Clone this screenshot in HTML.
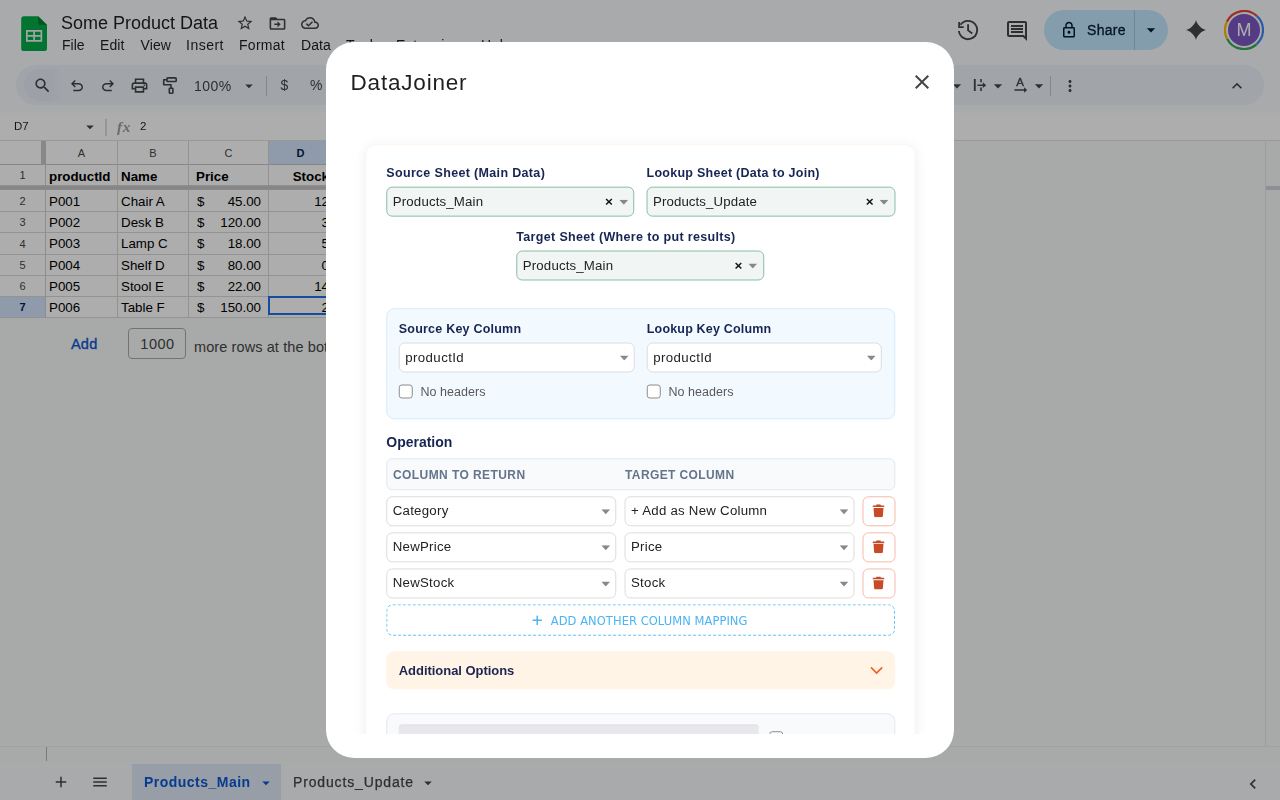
<!DOCTYPE html>
<html lang="en">
<head>
<meta charset="utf-8">
<title>Some Product Data - Google Sheets</title>
<style>
html,body{margin:0;padding:0;}
body{width:1280px;height:800px;overflow:hidden;position:relative;background:#f9fbfd;font-family:"Liberation Sans",sans-serif;color:#1f1f1f;}
.abs{position:absolute;white-space:nowrap;box-sizing:border-box;}
#app{position:absolute;left:0;top:0;width:1280px;height:800px;overflow:hidden;}
.menu{position:absolute;top:37px;font-size:14px;line-height:16px;color:#1f1f1f;white-space:nowrap;}
#title{position:absolute;left:61px;top:12px;font-size:18px;line-height:22px;color:#1f1f1f;white-space:nowrap;}
#toolbar{position:absolute;left:16px;top:65px;width:1248px;height:40px;border-radius:20px;background:#edf2fa;}
#tbsearch{position:absolute;left:24px;top:69px;width:38px;height:32px;border-radius:16px 0 0 16px;background:linear-gradient(90deg,#e7ecf6 70%,#edf2fa);}
.ic{position:absolute;}
.tbtxt{position:absolute;font-size:14px;line-height:16px;color:#444746;white-space:nowrap;}
.tbsep{position:absolute;top:76px;width:1px;height:20px;background:#c7c7c7;}
#grid{position:absolute;left:0;top:0;width:1280px;height:800px;}
.cell{position:absolute;font-size:13.330px;line-height:15px;color:#000;white-space:nowrap;}
.rh{position:absolute;left:0;width:45px;text-align:center;font-size:11px;line-height:13px;color:#444746;}
.ch{position:absolute;top:147px;text-align:center;font-size:11px;line-height:13px;color:#444746;}
#scrim{position:absolute;left:0;top:0;width:1280px;height:800px;background:rgba(0,0,0,0.32);}
#chrome,#bottombar{position:absolute;left:0;top:0;width:1280px;height:800px;will-change:transform;}
#dlg{will-change:transform;position:absolute;left:326px;top:42px;width:628px;height:716px;border-radius:28px;background:#fff;overflow:hidden;}
#dlgtitle{position:absolute;left:24.500px;top:27px;font-size:22.500px;line-height:28px;color:#1f1f1f;letter-spacing:0.81px;white-space:nowrap;}
#frame{position:absolute;left:24px;top:84px;width:580px;height:607.500px;overflow:hidden;background:#fff;color:#222;}
#frame>div{position:absolute;box-sizing:border-box;white-space:nowrap;}
.card{border:1px solid #fff6ec;border-radius:10px;background:#fff;box-shadow:0 2px 12px rgba(80,80,140,0.09);}
.lbl{font-weight:bold;font-size:12.500px;line-height:16px;color:#172554;}
.sel2{border:1px solid #86bfa2;border-radius:6px;background:#f1f5f3;}
.sel{border:1px solid #dcdcdc;border-radius:6px;background:#fff;}
.st{position:absolute;left:5.500px;top:50%;margin-top:-7.900px;font-size:13.250px;line-height:16px;color:#222;}
.sx{position:absolute;right:20.250px;top:50%;margin-top:-8.200px;font-size:13.500px;line-height:16px;font-weight:bold;color:#111;}
.sa{position:absolute;right:5.250px;top:50%;margin-top:-1.700px;}
.panel{border:1px solid #d3ebfd;border-radius:8px;background:#f3faff;}
.panel2{border:1px solid #e2e8f0;border-radius:8px;background:#f8fafc;}
.cb{border:1px solid #8a8a8a;border-radius:3px;background:#fff;}
.cbl{font-size:12.500px;line-height:16px;color:#595959;letter-spacing:0.04px;}
.thead{border:1px solid #e2e8f0;border-radius:6px;background:#f8fafc;}
.th{font-size:12px;line-height:14px;font-weight:bold;color:#64748b;}
.del{border:1px solid #f8b9a9;border-radius:6px;background:#fff;}
.addbtn{border-radius:6px;background:#fff;}
.addtxt{position:absolute;left:164.500px;top:10px;color:#4bb4f5;font-family:"DejaVu Sans","Liberation Sans",sans-serif;font-size:11.500px;line-height:14px;letter-spacing:0.05px;}
.opts{border-radius:8px;background:#fff4e6;}

</style>
</head>
<body>
<div id="app">
<div id="chrome">
<div id="title">Some Product Data</div>
<div class="menu" style="left:62px;letter-spacing:0">File</div>
<div class="menu" style="left:100px;letter-spacing:0.1px">Edit</div>
<div class="menu" style="left:140.500px;letter-spacing:0.1px">View</div>
<div class="menu" style="left:186px;letter-spacing:0.5px">Insert</div>
<div class="menu" style="left:239px;letter-spacing:0.28px">Format</div>
<div class="menu" style="left:301px;letter-spacing:0.05px">Data</div>
<div class="menu" style="left:346px;letter-spacing:0.4px">Tools</div>
<div class="menu" style="left:396px;letter-spacing:0.4px">Extensions</div>
<div class="menu" style="left:481px;letter-spacing:0.4px">Help</div>
<div id="toolbar"></div>
<div id="tbsearch"></div>
<svg class="ic" style="left:21px;top:15.500px" width="26" height="35.500" viewBox="0 0 26 35.500"><path fill="#00ac47" d="M2.600 0.200H17.200L26 9V32.600a2.600 2.600 0 0 1-2.600 2.600H2.800A2.600 2.600 0 0 1 .2 32.600V2.800A2.600 2.600 0 0 1 2.600 .2z"/><path fill="#00832d" d="M17.200 .2L26 9H19.500a2.300 2.300 0 0 1-2.300-2.300z"/><path fill="#f1f1f1" d="M5 14v11.800H21.200V14zm1.700 1.700h5.550v3.350H6.700zm7.250 0H19.500v3.350h-5.550zM6.700 20.750h5.550V24.100H6.700zm7.250 0H19.500V24.100h-5.550z"/></svg>
<svg class="ic" style="left:236.4px;top:14.3px" width="18" height="18" viewBox="0 0 24 24" ><path fill="#444746" d="M22 9.24l-7.19-.62L12 2 9.19 8.63 2 9.24l5.46 4.73L5.82 21 12 17.27 18.18 21l-1.63-7.03L22 9.24zM12 15.4l-3.76 2.27 1-4.28-3.32-2.88 4.38-.38L12 6.1l1.71 4.04 4.38.38-3.32 2.88 1 4.28L12 15.4z"/></svg>
<svg class="ic" style="left:267.8px;top:13.5px" width="19" height="19" viewBox="0 0 24 24" ><path fill="#444746" d="M20 6h-8l-2-2H4c-1.1 0-1.99.9-1.99 2L2 18c0 1.1.9 2 2 2h16c1.1 0 2-.9 2-2V8c0-1.1-.9-2-2-2zm0 12H4V8h16v10zm-8-1l4-4-4-4v3H8v2h4v3z"/></svg>
<svg class="ic" style="left:300.6px;top:14.2px" width="18" height="18" viewBox="0 0 24 24" ><path fill="#444746" d="M19.35 10.04C18.67 6.59 15.64 4 12 4 9.11 4 6.6 5.64 5.35 8.04 2.34 8.36 0 10.91 0 14c0 3.31 2.69 6 6 6h13c2.76 0 5-2.24 5-5 0-2.64-2.05-4.78-4.65-4.96zM19 18H6c-2.21 0-4-1.79-4-4 0-2.05 1.53-3.76 3.56-3.97l1.07-.11.5-.95C8.08 7.14 9.94 6 12 6c2.62 0 4.88 1.86 5.39 4.43l.3 1.5 1.53.11c1.56.1 2.78 1.41 2.78 2.96 0 1.65-1.35 3-3 3zm-9-3.82l-2.09-2.09L6.5 13.5 10 17l6.01-6.01-1.41-1.41z"/></svg>
<svg class="ic" style="left:955.960px;top:17.900px" width="24" height="24" viewBox="0 0 24 24"><g fill="none" stroke="#444746" stroke-width="1.850"><path d="M2.910 13.020A9.150 9.150 0 1 0 4.510 6.750"/><path d="M3.150 4.100V9.050H7.750"/><path d="M12.100 6.300V12.400L16.300 15.600"/></g></svg>
<svg class="ic" style="left:1005px;top:18.5px" width="24" height="24" viewBox="0 0 24 24" ><path fill="#444746" d="M21.99 4c0-1.1-.89-2-1.99-2H4c-1.1 0-2 .9-2 2v12c0 1.1.9 2 2 2h14l4 4-.01-18zM20 4v13.17L18.83 16H4V4h16zM6 12h12v2H6zm0-3h12v2H6zm0-3h12v2H6z"/></svg>
<div class="abs" style="left:1044px;top:10px;width:124px;height:40px;border-radius:20px;background:#c2e7ff;"></div>
<div class="abs" style="left:1134px;top:10px;width:1px;height:40px;background:#a9c9dc;"></div>
<svg class="ic" style="left:1060px;top:20.5px" width="18" height="18" viewBox="0 0 24 24" ><path fill="#001d35" d="M18 8h-1V6c0-2.76-2.24-5-5-5S7 3.24 7 6v2H6c-1.1 0-2 .9-2 2v10c0 1.1.9 2 2 2h12c1.1 0 2-.9 2-2V10c0-1.1-.9-2-2-2zM9 6c0-1.66 1.34-3 3-3s3 1.34 3 3v2H9V6zm9 14H6V10h12v10zm-6-3c1.1 0 2-.9 2-2s-.9-2-2-2-2 .9-2 2 .9 2 2 2z"/></svg>
<div class="abs" style="left:1087px;top:21px;font-size:14px;line-height:18px;color:#001d35;letter-spacing:0.3px;-webkit-text-stroke:0.3px #001d35;">Share</div>
<svg class="ic" style="left:1141px;top:20px" width="20" height="20" viewBox="0 0 24 24" ><path fill="#001d35" d="M7 10l5 5 5-5z"/></svg>
<svg class="ic" style="left:1186px;top:20px" width="20" height="20" viewBox="-10 -10 20 20"><path fill="#444746" d="M0-10C.6-6 6-.6 10 0 6 .6.6 6 0 10-.6 6-6 .6-10 0-6-.6-.6-6 0-10z"/></svg>
<svg class="ic" style="left:1224px;top:10px" width="40" height="40" viewBox="0 0 40 40"><path d="M2.92 11.67A19 19 0 0 1 32.71 5.88" fill="none" stroke="#ea4335" stroke-width="2.200"/><path d="M32.71 5.88A19 19 0 0 1 32.71 34.12" fill="none" stroke="#4285f4" stroke-width="2.200"/><path d="M32.71 34.12A19 19 0 0 1 3.07 28.63" fill="none" stroke="#34a853" stroke-width="2.200"/><path d="M3.07 28.63A19 19 0 0 1 2.92 11.67" fill="none" stroke="#fbbc04" stroke-width="2.200"/><circle cx="20" cy="20" r="16" fill="#7e57c2"/><text x="20" y="26.300" text-anchor="middle" font-family="Liberation Sans, sans-serif" font-size="18" fill="#ffffff">M</text></svg>
<svg class="ic" style="left:33.3px;top:75.5px" width="19" height="19" viewBox="0 0 24 24" ><path fill="#444746" d="M15.5 14h-.79l-.28-.27C15.41 12.59 16 11.11 16 9.5 16 5.91 13.09 3 9.5 3S3 5.91 3 9.5 5.91 16 9.5 16c1.61 0 3.09-.59 4.23-1.57l.27.28v.79l5 4.99L20.49 19l-4.99-5zm-6 0C7.01 14 5 11.99 5 9.5S7.01 5 9.5 5 14 7.01 14 9.5 11.99 14 9.5 14z"/></svg>
<svg class="ic" style="left:67.5px;top:77px" width="18" height="18" viewBox="0 0 24 24" ><path fill="#444746" d="M7 19v-2h7.1q1.575 0 2.737-1Q18 15 18 13.5T16.837 11Q15.675 10 14.1 10H7.8l2.6 2.6L9 14 4 9l5-5 1.4 1.4L7.8 8h6.3q2.425 0 4.163 1.575Q20 11.15 20 13.5q0 2.35-1.737 3.925Q16.525 19 14.1 19Z"/></svg>
<svg class="ic" style="left:98.5px;top:77px" width="18" height="18" viewBox="0 0 24 24" transform="scale(-1,1)"><path fill="#444746" d="M7 19v-2h7.1q1.575 0 2.737-1Q18 15 18 13.5T16.837 11Q15.675 10 14.1 10H7.8l2.6 2.6L9 14 4 9l5-5 1.4 1.4L7.8 8h6.3q2.425 0 4.163 1.575Q20 11.15 20 13.5q0 2.35-1.737 3.925Q16.525 19 14.1 19Z"/></svg>
<svg class="ic" style="left:130px;top:76px" width="19" height="19" viewBox="0 0 24 24" ><path fill="#444746" d="M19 8h-1V3H6v5H5c-1.66 0-3 1.34-3 3v6h4v4h12v-4h4v-6c0-1.66-1.34-3-3-3zM8 5h8v3H8V5zm8 14H8v-4h8v4zm4-4h-2v-2H6v2H4v-4c0-.55.45-1 1-1h14c.55 0 1 .45 1 1v4z M18 10.5a1 1 0 1 0 0 2 1 1 0 0 0 0-2z"/></svg>
<svg class="ic" style="left:162px;top:76px" width="16" height="19" viewBox="0 0 16 19"><g fill="none" stroke="#444746" stroke-width="1.600" stroke-linejoin="round"><rect x="5" y="1.900" width="9.200" height="3.600" rx="0.800"/><path d="M5 3.700H1.700v5.100H9v3.400"/><rect x="7.300" y="12.300" width="3.600" height="4.900" rx="0.600"/></g></svg>
<div class="tbtxt" style="left:194px;top:78px;letter-spacing:0.45px">100%</div>
<svg class="ic" style="left:240px;top:76.5px" width="18" height="18" viewBox="0 0 24 24" ><path fill="#444746" d="M7 10l5 5 5-5z"/></svg>
<div class="tbsep" style="left:266px"></div>
<div class="tbtxt" style="left:280.500px;top:77px;">$</div>
<div class="tbtxt" style="left:310px;top:77px;">%</div>
<svg class="ic" style="left:947px;top:75.5px" width="20" height="20" viewBox="0 0 24 24" ><path fill="#444746" d="M7 10l5 5 5-5z"/></svg>
<svg class="ic" style="left:966px;top:75px" width="22" height="20" viewBox="0 0 22 20"><path fill="#444746" d="M7.850 4h1.850v12H7.850zM14.200 4h1.600v3.300h-1.600zM14.200 12.600h1.600V16h-1.600zM11.400 9.400h5.400V7.300L20.200 10.200 16.800 13.100V11h-5.400z"/></svg>
<svg class="ic" style="left:988px;top:75.5px" width="20" height="20" viewBox="0 0 24 24" ><path fill="#444746" d="M7 10l5 5 5-5z"/></svg>
<svg class="ic" style="left:1010px;top:75px" width="20" height="20" viewBox="0 0 20 20"><text x="10" y="11.300" text-anchor="middle" font-family="Liberation Sans, sans-serif" font-size="11.500" fill="#444746" stroke="#444746" stroke-width="0.350">A</text><path fill="#444746" d="M4.500 14.200h9.600v-1.900l3.100 2.700-3.100 2.700v-1.900H4.500z"/></svg>
<svg class="ic" style="left:1028.5px;top:75.5px" width="20" height="20" viewBox="0 0 24 24" ><path fill="#444746" d="M7 10l5 5 5-5z"/></svg>
<div class="tbsep" style="left:1050px"></div>
<svg class="ic" style="left:1060.5px;top:76.5px" width="18" height="18" viewBox="0 0 24 24" ><path fill="#444746" d="M12 8c1.1 0 2-.9 2-2s-.9-2-2-2-2 .9-2 2 .9 2 2 2zm0 2c-1.1 0-2 .9-2 2s.9 2 2 2 2-.9 2-2-.9-2-2-2zm0 6c-1.1 0-2 .9-2 2s.9 2 2 2 2-.9 2-2-.9-2-2-2z"/></svg>
<svg class="ic" style="left:1226.5px;top:75.5px" width="20" height="20" viewBox="0 0 24 24" ><path fill="#444746" d="M12 8l-6 6 1.41 1.41L12 10.83l4.59 4.58L18 14z"/></svg>
<div class="abs" style="left:0;top:113px;width:1280px;height:27px;background:#fff;"></div>
<div class="abs" style="left:0;top:110px;width:1280px;height:3px;background:linear-gradient(#f9fbfd,#fcfdfe);"></div>
<div class="abs" style="left:14px;top:119px;font-size:11.500px;line-height:15px;color:#1f1f1f;">D7</div>
<svg class="ic" style="left:80.6px;top:118px" width="18" height="18" viewBox="0 0 24 24" ><path fill="#444746" d="M7 10l5 5 5-5z"/></svg>
<div class="abs" style="left:105px;top:119px;width:2px;height:17px;background:#dcdcdc;"></div>
<div class="abs" style="left:117px;top:118px;font-family:'Liberation Serif',serif;font-style:italic;font-weight:bold;font-size:15.500px;line-height:18px;color:#9aa0a6;letter-spacing:0.7px;">fx</div>
<div class="abs" style="left:140px;top:119px;font-size:11.500px;line-height:15px;color:#1f1f1f;">2</div>
</div>
<div id="grid">
<div class="abs" style="left:0;top:140px;width:1266px;height:606px;background:#f8f9fa;"></div>
<div class="abs" style="left:0;top:140px;width:333px;height:178px;background:#fff;"></div>
<div class="abs" style="left:269px;top:141px;width:63px;height:23px;background:#d3e3fd;"></div>
<div class="abs" style="left:0;top:297px;width:45px;height:20px;background:#d3e3fd;"></div>
<div class="abs" style="left:0;top:140px;width:1280px;height:1px;background:#e0e0e0;"></div>
<div class="abs" style="left:0;top:164px;width:333px;height:1px;background:#c6c6c6;"></div>
<div class="abs" style="left:0;top:185px;width:333px;height:1px;background:#d9d9d9;"></div>
<div class="abs" style="left:0;top:211px;width:333px;height:1px;background:#d9d9d9;"></div>
<div class="abs" style="left:0;top:232px;width:333px;height:1px;background:#d9d9d9;"></div>
<div class="abs" style="left:0;top:254px;width:333px;height:1px;background:#d9d9d9;"></div>
<div class="abs" style="left:0;top:275px;width:333px;height:1px;background:#d9d9d9;"></div>
<div class="abs" style="left:0;top:296px;width:333px;height:1px;background:#d9d9d9;"></div>
<div class="abs" style="left:0;top:317px;width:333px;height:1px;background:#d9d9d9;"></div>
<div class="abs" style="left:117px;top:141px;width:1px;height:177px;background:#d9d9d9;"></div>
<div class="abs" style="left:188px;top:141px;width:1px;height:177px;background:#d9d9d9;"></div>
<div class="abs" style="left:268px;top:141px;width:1px;height:177px;background:#d9d9d9;"></div>
<div class="abs" style="left:332px;top:141px;width:1px;height:177px;background:#d9d9d9;"></div>
<div class="abs" style="left:45px;top:165px;width:1px;height:153px;background:#d0d0d0;"></div>
<div class="abs" style="left:41px;top:141px;width:5px;height:24px;background:#c9c9c9;"></div>
<div class="abs" style="left:0;top:185px;width:333px;height:5px;background:linear-gradient(#d6d6d6,#c6c6c6 35%,#c6c6c6 75%,#d2d2d2);"></div>
<div class="abs" style="left:1266px;top:186px;width:14px;height:4px;background:#cfd3da;"></div>
<div class="abs" style="left:1265px;top:141px;width:1px;height:621px;background:#e6e6e6;"></div>
<div class="abs" style="left:1266px;top:141px;width:14px;height:621px;background:#f8f9fa;"></div>
<div class="abs" style="left:1266px;top:186px;width:14px;height:4px;background:#cfd3da;"></div>
<div class="abs" style="left:0;top:746px;width:1280px;height:16px;background:#f8f9fa;"></div>
<div class="abs" style="left:0;top:746px;width:1280px;height:1px;background:#ededed;"></div>
<div class="abs" style="left:46px;top:747px;width:1px;height:14px;background:#b5b5b5;"></div>
<div class="ch" style="left:61.5px;width:40px;">A</div>
<div class="ch" style="left:133px;width:40px;">B</div>
<div class="ch" style="left:208.5px;width:40px;">C</div>
<div class="ch" style="left:280.5px;width:40px;font-weight:bold;color:#041e49;">D</div>
<div class="rh" style="top:169px;">1</div>
<div class="rh" style="top:195px;">2</div>
<div class="rh" style="top:216px;">3</div>
<div class="rh" style="top:238px;">4</div>
<div class="rh" style="top:259px;">5</div>
<div class="rh" style="top:280px;">6</div>
<div class="rh" style="top:301px;font-weight:bold;color:#041e49;">7</div>
<div class="cell" style="left:49px;top:169px;font-weight:bold;">productId</div>
<div class="cell" style="left:121px;top:169px;font-weight:bold;">Name</div>
<div class="cell" style="left:196px;top:169px;font-weight:bold;">Price</div>
<div class="cell" style="left:269px;width:60px;text-align:right;top:169px;font-weight:bold;">Stock</div>
<div class="cell" style="left:49px;top:194px;">P001</div>
<div class="cell" style="left:121px;top:194px;">Chair A</div>
<div class="cell" style="left:197px;top:194px;">$</div>
<div class="cell" style="left:191px;width:70px;text-align:right;top:194px;">45.00</div>
<div class="cell" style="left:269px;width:60px;text-align:right;top:194px;">12</div>
<div class="cell" style="left:49px;top:215px;">P002</div>
<div class="cell" style="left:121px;top:215px;">Desk B</div>
<div class="cell" style="left:197px;top:215px;">$</div>
<div class="cell" style="left:191px;width:70px;text-align:right;top:215px;">120.00</div>
<div class="cell" style="left:269px;width:60px;text-align:right;top:215px;">3</div>
<div class="cell" style="left:49px;top:236px;">P003</div>
<div class="cell" style="left:121px;top:236px;">Lamp C</div>
<div class="cell" style="left:197px;top:236px;">$</div>
<div class="cell" style="left:191px;width:70px;text-align:right;top:236px;">18.00</div>
<div class="cell" style="left:269px;width:60px;text-align:right;top:236px;">5</div>
<div class="cell" style="left:49px;top:258px;">P004</div>
<div class="cell" style="left:121px;top:258px;">Shelf D</div>
<div class="cell" style="left:197px;top:258px;">$</div>
<div class="cell" style="left:191px;width:70px;text-align:right;top:258px;">80.00</div>
<div class="cell" style="left:269px;width:60px;text-align:right;top:258px;">0</div>
<div class="cell" style="left:49px;top:279px;">P005</div>
<div class="cell" style="left:121px;top:279px;">Stool E</div>
<div class="cell" style="left:197px;top:279px;">$</div>
<div class="cell" style="left:191px;width:70px;text-align:right;top:279px;">22.00</div>
<div class="cell" style="left:269px;width:60px;text-align:right;top:279px;">14</div>
<div class="cell" style="left:49px;top:300px;">P006</div>
<div class="cell" style="left:121px;top:300px;">Table F</div>
<div class="cell" style="left:197px;top:300px;">$</div>
<div class="cell" style="left:191px;width:70px;text-align:right;top:300px;">150.00</div>
<div class="cell" style="left:269px;width:60px;text-align:right;top:300px;">2</div>
<div class="abs" style="left:268px;top:296px;width:61px;height:19px;border:2px solid #1a73e8;"></div>
<div class="abs" style="left:71px;top:335px;font-size:14.500px;line-height:18px;color:#0b57d0;-webkit-text-stroke:0.35px #0b57d0;letter-spacing:0.2px">Add</div>
<div class="abs" style="left:128px;top:328px;width:58px;height:31px;border:1px solid #a9aaaa;border-radius:4px;"></div>
<div class="abs" style="left:128.500px;top:335px;width:58px;text-align:center;font-size:14.500px;line-height:18px;color:#444746;letter-spacing:0.5px">1000</div>
<div class="abs" style="left:194px;top:338px;font-size:14.500px;line-height:18px;color:#444746;letter-spacing:0.1px">more rows at the bottom</div>
</div>
<div id="bottombar">
<div class="abs" style="left:0;top:762px;width:1280px;height:38px;background:#f9fbfd;"></div>
<svg class="ic" style="left:52px;top:773px" width="18" height="18" viewBox="0 0 24 24" ><path fill="#444746" d="M19 13h-6v6h-2v-6H5v-2h6V5h2v6h6v2z"/></svg>
<svg class="ic" style="left:91px;top:773px" width="18" height="18" viewBox="0 0 24 24" ><path fill="#444746" d="M3 18h18v-2H3v2zm0-5h18v-2H3v2zm0-7v2h18V6H3z"/></svg>
<div class="abs" style="left:132px;top:764px;width:149px;height:36px;background:#e1e9f7;"></div>
<div class="abs" style="left:144px;top:773px;font-size:14px;line-height:18px;color:#0b57d0;font-weight:bold;letter-spacing:0.48px">Products_Main</div>
<svg class="ic" style="left:257px;top:773.5px" width="18" height="18" viewBox="0 0 24 24" ><path fill="#0b57d0" d="M7 10l5 5 5-5z"/></svg>
<div class="abs" style="left:293px;top:773px;font-size:14px;line-height:18px;color:#444746;letter-spacing:0.85px;-webkit-text-stroke:0.25px #444746">Products_Update</div>
<svg class="ic" style="left:419px;top:773.5px" width="18" height="18" viewBox="0 0 24 24" ><path fill="#444746" d="M7 10l5 5 5-5z"/></svg>
<svg class="ic" style="left:1242.5px;top:774px" width="20" height="20" viewBox="0 0 24 24" ><path fill="#444746" d="M15.41 7.41L14 6l-6 6 6 6 1.41-1.41L10.83 12z"/></svg>
</div>
</div>
<div id="scrim"></div>
<div id="dlg">
<div id="dlgtitle">DataJoiner</div>
<svg class="ic" style="left:584px;top:28px" width="24" height="24" viewBox="0 0 24 24"><path fill="#444746" d="M19 6.41L17.59 5 12 10.59 6.41 5 5 6.41 10.59 12 5 17.59 6.41 19 12 13.41 17.59 19 19 17.59 13.41 12z"/></svg>
<div id="frame">
<div class="card" style="left:15px;top:18px;transform:translate(0.4px,0.2px);width:549.6px;height:700px;"></div>
<div class="lbl" style="left:36px;top:39px;transform:translate(0.25px,0px);letter-spacing:0.34px">Source Sheet (Main Data)</div>
<div class="sel2" style="left:36px;top:60px;transform:translate(0.25px,0.65px);width:248px;height:30.3px;"><span class="st" style="letter-spacing:0.16px">Products_Main</span><span class="sx">&#215;</span><svg class="sa" width="9" height="5" viewBox="0 0 9 5"><path fill="#888" d="M0 0h9L4.500 5z"/></svg></div>
<div class="lbl" style="left:296px;top:39px;transform:translate(0.5px,0px);letter-spacing:0.27px">Lookup Sheet (Data to Join)</div>
<div class="sel2" style="left:296px;top:60px;transform:translate(0.5px,0.65px);width:248.5px;height:30.3px;"><span class="st" style="letter-spacing:0.1px">Products_Update</span><span class="sx">&#215;</span><svg class="sa" width="9" height="5" viewBox="0 0 9 5"><path fill="#888" d="M0 0h9L4.500 5z"/></svg></div>
<div class="lbl" style="left:166px;top:102px;transform:translate(0.25px,0.75px);letter-spacing:0.34px">Target Sheet (Where to put results)</div>
<div class="sel2" style="left:166px;top:124px;transform:translate(0.25px,0.5px);width:247.5px;height:30.3px;"><span class="st" style="letter-spacing:0.16px">Products_Main</span><span class="sx">&#215;</span><svg class="sa" width="9" height="5" viewBox="0 0 9 5"><path fill="#888" d="M0 0h9L4.500 5z"/></svg></div>
<div class="panel" style="left:36px;top:182px;transform:translate(0.25px,0.25px);width:508.75px;height:110.5px;"></div>
<div class="lbl" style="left:48px;top:194px;transform:translate(0.75px,0.75px);letter-spacing:0.22px">Source Key Column</div>
<div class="sel" style="left:48px;top:216px;transform:translate(0.75px,0.5px);width:235.75px;height:30px;"><span class="st" style="letter-spacing:0.4px">productId</span><svg class="sa" width="9" height="5" viewBox="0 0 9 5"><path fill="#888" d="M0 0h9L4.500 5z"/></svg></div>
<div class="lbl" style="left:296px;top:194px;transform:translate(0.75px,0.75px);letter-spacing:0.18px">Lookup Key Column</div>
<div class="sel" style="left:296px;top:216px;transform:translate(0.75px,0.5px);width:235px;height:30px;"><span class="st" style="letter-spacing:0.4px">productId</span><svg class="sa" width="9" height="5" viewBox="0 0 9 5"><path fill="#888" d="M0 0h9L4.500 5z"/></svg></div>
<div class="cb" style="left:48px;top:258px;transform:translate(0.75px,0.5px);width:14px;height:14px;"></div>
<div class="cbl" style="left:70px;top:257px;transform:translate(0.5px,0.75px);">No headers</div>
<div class="cb" style="left:296px;top:258px;transform:translate(0.75px,0.5px);width:14px;height:14px;"></div>
<div class="cbl" style="left:318px;top:257px;transform:translate(0.5px,0.75px);">No headers</div>
<div class="lbl" style="left:36px;top:307px;transform:translate(0.25px,0.75px);font-size:14px;letter-spacing:0">Operation</div>
<div class="thead" style="left:36px;top:332px;transform:translate(0.25px,0.25px);width:508.75px;height:32px;"></div>
<div class="th" style="left:43px;top:342px;letter-spacing:0.42px">COLUMN TO RETURN</div>
<div class="th" style="left:275px;top:342px;letter-spacing:0.39px">TARGET COLUMN</div>
<div class="sel" style="left:36px;top:370px;transform:translate(0.25px,0.25px);width:230px;height:30px;"><span class="st" style="letter-spacing:0.25px">Category</span><svg class="sa" width="9" height="5" viewBox="0 0 9 5"><path fill="#888" d="M0 0h9L4.500 5z"/></svg></div>
<div class="sel" style="left:274px;top:370px;transform:translate(0.5px,0.25px);width:230px;height:30px;"><span class="st" style="letter-spacing:0.25px">+ Add as New Column</span><svg class="sa" width="9" height="5" viewBox="0 0 9 5"><path fill="#888" d="M0 0h9L4.500 5z"/></svg></div>
<div class="del" style="left:512px;top:370px;transform:translate(0.5px,0.25px);width:32.5px;height:30px;"><svg width="12" height="13" viewBox="0 0 12 13" style="position:absolute;left:8.750px;top:7px"><path fill="#c84b28" d="M4.100 0h3.800l.6 1.200H11.500q.5 0 .5.500v.600q0 .500-.5.500H.5q-.5 0-.5-.500v-.600q0-.500.5-.500H3.500zM1 3.700h10l-.65 8q-.1 1.300-1.400 1.300H3.050q-1.300 0-1.400-1.300z"/></svg></div>
<div class="sel" style="left:36px;top:406px;transform:translate(0.25px,0.35px);width:230px;height:30px;"><span class="st" style="letter-spacing:0.25px">NewPrice</span><svg class="sa" width="9" height="5" viewBox="0 0 9 5"><path fill="#888" d="M0 0h9L4.500 5z"/></svg></div>
<div class="sel" style="left:274px;top:406px;transform:translate(0.5px,0.35px);width:230px;height:30px;"><span class="st" style="letter-spacing:0.25px">Price</span><svg class="sa" width="9" height="5" viewBox="0 0 9 5"><path fill="#888" d="M0 0h9L4.500 5z"/></svg></div>
<div class="del" style="left:512px;top:406px;transform:translate(0.5px,0.35px);width:32.5px;height:30px;"><svg width="12" height="13" viewBox="0 0 12 13" style="position:absolute;left:8.750px;top:7px"><path fill="#c84b28" d="M4.100 0h3.800l.6 1.200H11.500q.5 0 .5.500v.600q0 .500-.5.500H.5q-.5 0-.5-.500v-.600q0-.500.5-.500H3.500zM1 3.700h10l-.65 8q-.1 1.300-1.400 1.300H3.050q-1.300 0-1.400-1.300z"/></svg></div>
<div class="sel" style="left:36px;top:442px;transform:translate(0.25px,0.45px);width:230px;height:30px;"><span class="st" style="letter-spacing:0.25px">NewStock</span><svg class="sa" width="9" height="5" viewBox="0 0 9 5"><path fill="#888" d="M0 0h9L4.500 5z"/></svg></div>
<div class="sel" style="left:274px;top:442px;transform:translate(0.5px,0.45px);width:230px;height:30px;"><span class="st" style="letter-spacing:0.25px">Stock</span><svg class="sa" width="9" height="5" viewBox="0 0 9 5"><path fill="#888" d="M0 0h9L4.500 5z"/></svg></div>
<div class="del" style="left:512px;top:442px;transform:translate(0.5px,0.45px);width:32.5px;height:30px;"><svg width="12" height="13" viewBox="0 0 12 13" style="position:absolute;left:8.750px;top:7px"><path fill="#c84b28" d="M4.100 0h3.800l.6 1.200H11.500q.5 0 .5.500v.600q0 .500-.5.500H.5q-.5 0-.5-.500v-.600q0-.500.5-.500H3.500zM1 3.700h10l-.65 8q-.1 1.300-1.400 1.300H3.050q-1.300 0-1.400-1.300z"/></svg></div>
<div class="addbtn" style="left:36px;top:478px;transform:translate(0.25px,0.25px);width:508.75px;height:31.5px;"><svg width="509" height="32" style="position:absolute;left:0;top:0"><rect x="0.500" y="0.500" width="507.750" height="30.500" rx="6" fill="none" stroke="#62c1f6" stroke-width="1" stroke-dasharray="3 2"/></svg><svg width="10" height="10" viewBox="0 0 10 10" style="position:absolute;left:146px;top:11px"><path d="M5 .3v9.400M.3 5h9.400" stroke="#4bb4f5" stroke-width="1.500" fill="none"/></svg><span class="addtxt">ADD ANOTHER COLUMN MAPPING</span></div>
<div class="opts" style="left:36px;top:525px;transform:translate(0.25px,0.25px);width:508.75px;height:37.5px;"></div>
<div class="lbl" style="left:48px;top:536px;transform:translate(0.75px,0.5px);font-size:13px;letter-spacing:-0.04px;color:#1b2550">Additional Options</div>
<svg class="ic" style="left:520px;top:540px;transform:translate(0px,0.25px);" width="13" height="9" viewBox="0 0 13 9"><path d="M1 1.200l5.600 5.600L12.200 1.200" fill="none" stroke="#f55f28" stroke-width="1.700"/></svg>
<div class="panel2" style="left:36px;top:587px;transform:translate(0.25px,0.25px);width:508.75px;height:80px;"></div>
<div class="abs" style="left:48px;top:598px;transform:translate(0.75px,0.25px);width:360px;height:40px;background:#e8e8ec;border-top:1px solid #d9d9de;border-radius:4px 4px 0 0;"></div>
<div class="cbl" style="left:71px;top:604px;transform:translate(0px,0.6px);color:#444">Select options...</div>
<div class="cb" style="left:419px;top:605px;transform:translate(0.25px,0.25px);width:14px;height:14px;"></div>
<div class="cbl" style="left:443px;top:604px;transform:translate(0px,0.6px);">Ignore case (Aa)</div>
</div>
</div>
</body>
</html>
